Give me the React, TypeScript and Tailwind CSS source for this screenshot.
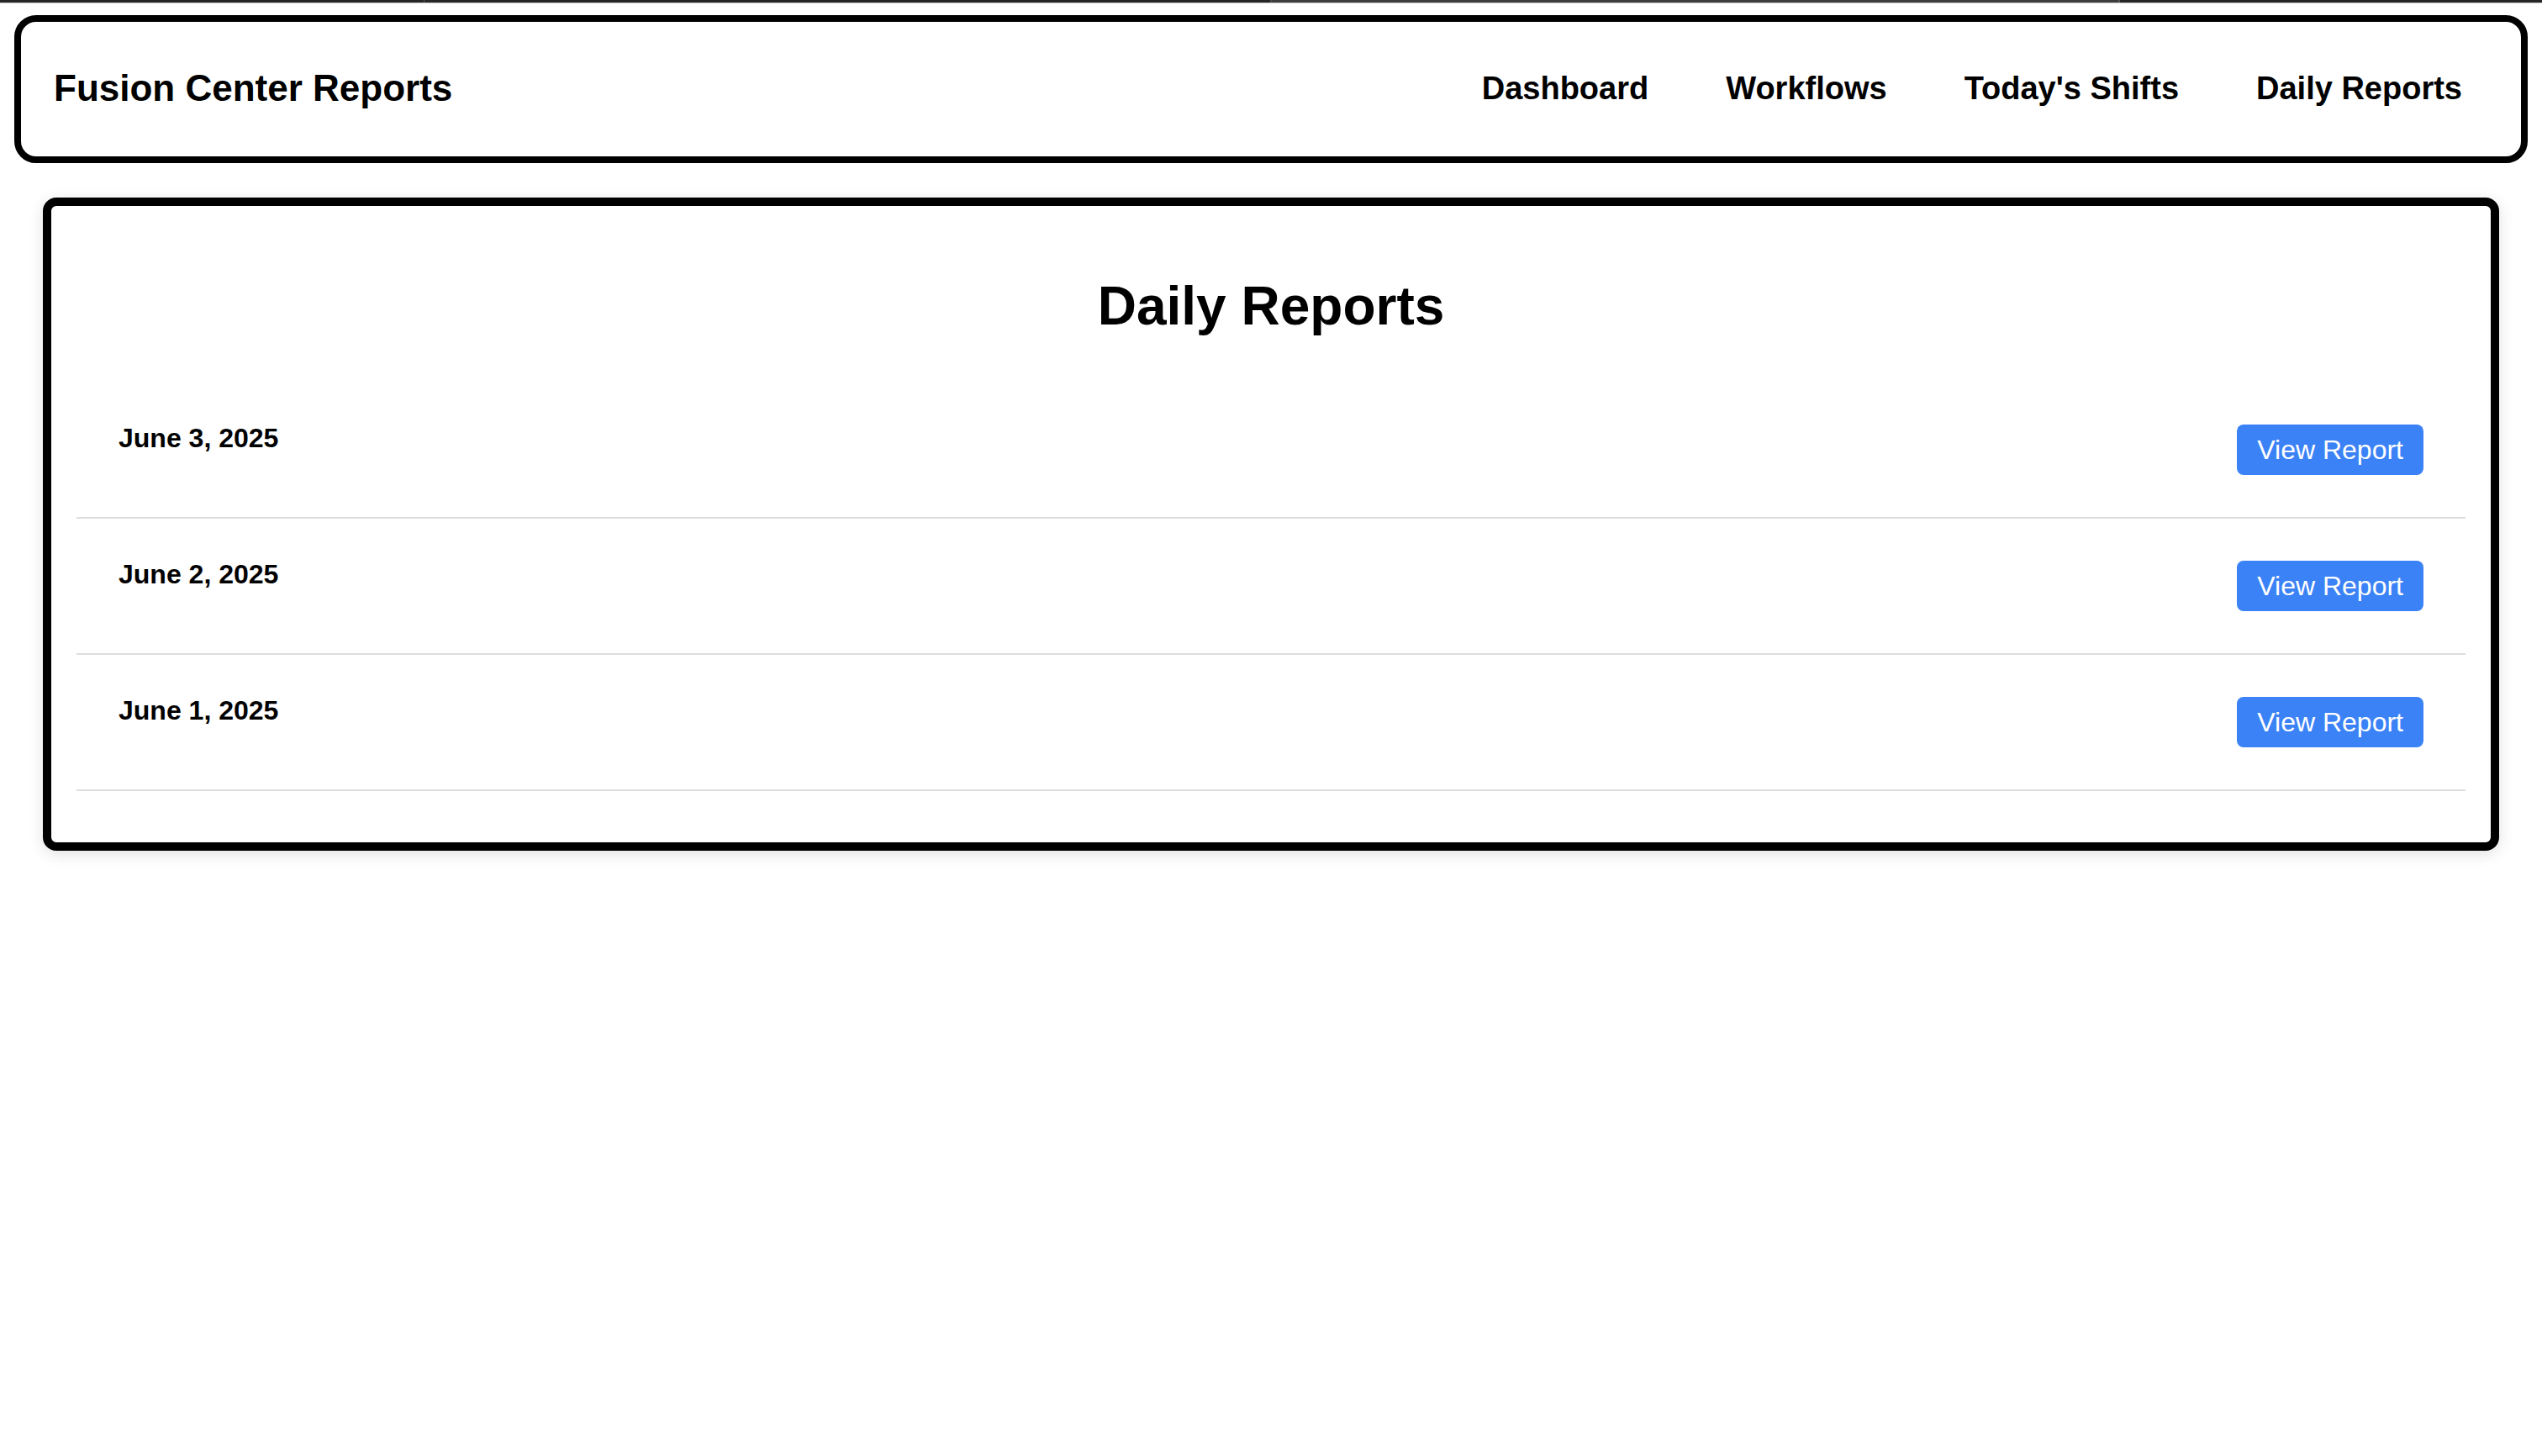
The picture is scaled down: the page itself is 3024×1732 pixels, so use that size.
import { FunctionComponent } from "react";

const FONT = "font-['Liberation_Sans',Arial,sans-serif]";

const navLinks = ["Dashboard", "Workflows", "Today's Shifts", "Daily Reports"];

const reports = ["June 3, 2025", "June 2, 2025", "June 1, 2025"];

// thin dark strip at the very top of the capture
const TopStrip: FunctionComponent = () => {
	return (
		<div className="flex flex-col">
			<div className="flex h-[3px] w-full">
				<div className="w-[504px] bg-[#262626]" />
				<div className="w-[1px] bg-[#555555]" />
				<div className="w-[1006px] bg-[#262626]" />
				<div className="w-[2px] bg-[#4a4a4a]" />
				<div className="w-[1007px] bg-[#3d3d3d]" />
				<div className="w-[2px] bg-[#555555]" />
				<div className="flex-1 bg-[#262626]" />
			</div>
			<div className="h-[1px] w-full bg-[#c8c8c8]" />
		</div>
	);
};

const Header: FunctionComponent = () => {
	return (
		<header className="mx-[17px] mt-[14px] flex h-[176px] items-center justify-between rounded-[26px] border-[8px] border-black bg-white pl-[39px] pr-[70px]">
			<h1 className="pb-[3px] text-[44px] font-bold leading-[50px] text-black">
				Fusion Center Reports
			</h1>
			<nav className="flex items-center gap-[92px]">
				{navLinks.map((link) => (
					<a
						key={link}
						href="#"
						className="pb-[2px] text-[38px] font-bold leading-[44px] text-black"
					>
						{link}
					</a>
				))}
			</nav>
		</header>
	);
};

interface ReportRowProps {
	date: string;
}

const ReportRow: FunctionComponent<ReportRowProps> = ({ date }: ReportRowProps) => {
	return (
		<li className="flex items-start justify-between border-b-[2px] border-[#dddddd] px-[50px] py-[50px]">
			<span className="-mt-[2px] text-[32px] font-bold leading-[37px] text-black">
				{date}
			</span>
			<button
				type="button"
				className="rounded-[8px] bg-[#3b82f6] px-[24px] py-[12px] text-[32px] leading-[36px] text-white"
			>
				View Report
			</button>
		</li>
	);
};

export default function App() {
	return (
		<div className={`${FONT} min-h-[1732px] bg-white`}>
			<TopStrip />
			<Header />
			<main className="mx-[51px] mt-[41px] rounded-[16px] border-[10px] border-black bg-white px-[30px] pb-[61px] pt-[82px] shadow-[0_4px_18px_rgba(0,0,0,0.12)]">
				<h2 className="mb-[54px] text-center text-[64px] font-bold leading-[74px] text-black">
					Daily Reports
				</h2>
				<ul className="flex flex-col">
					{reports.map((date) => (
						<ReportRow key={date} date={date} />
					))}
				</ul>
			</main>
		</div>
	);
}
